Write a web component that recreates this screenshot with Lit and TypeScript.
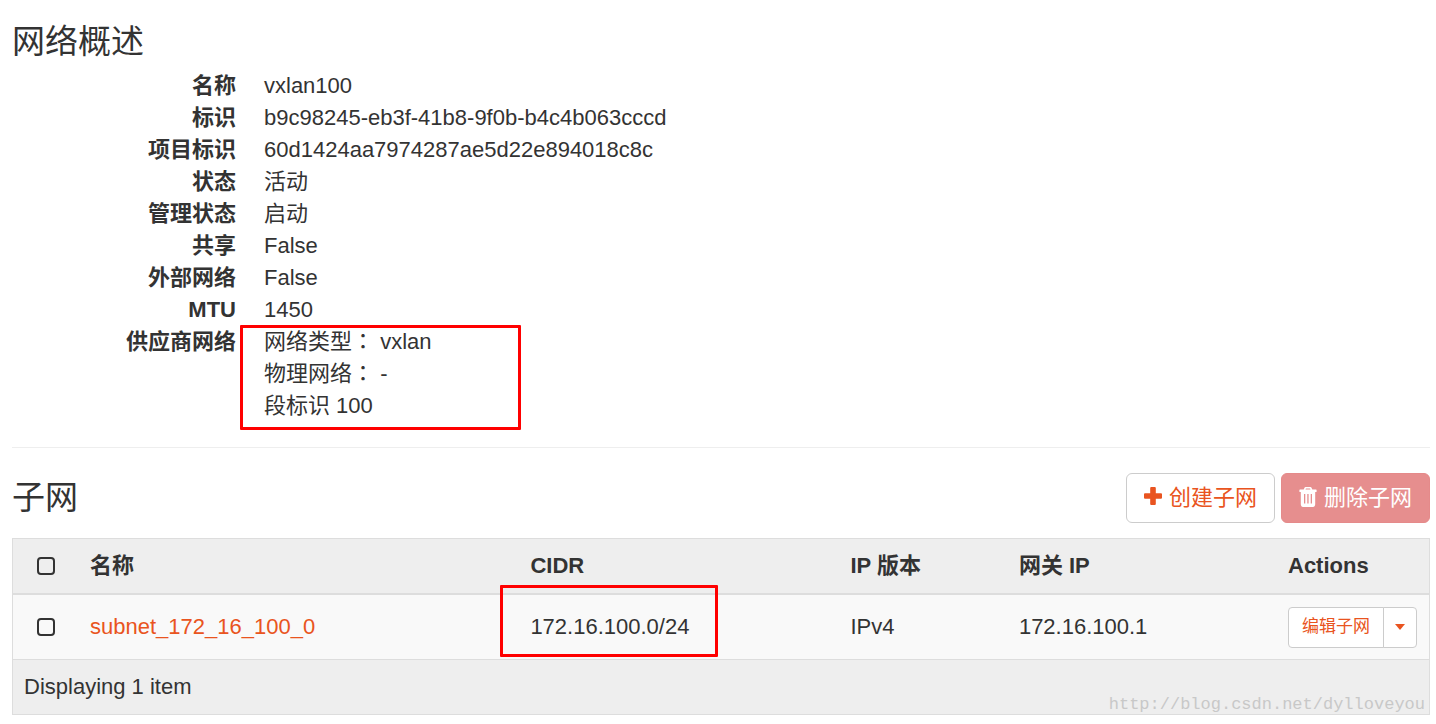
import { LitElement, html, css, svg } from "lit";
import { customElement, state } from "lit/decorators.js";

interface Subnet {
  name: string;
  cidr: string;
  version: string;
  gateway: string;
}

const DETAILS: Array<[string, string]> = [
  ["名称", "vxlan100"],
  ["标识", "b9c98245-eb3f-41b8-9f0b-b4c4b063cccd"],
  ["项目标识", "60d1424aa7974287ae5d22e894018c8c"],
  ["状态", "活动"],
  ["管理状态", "启动"],
  ["共享", "False"],
  ["外部网络", "False"],
  ["MTU", "1450"],
];

const colon = html`<span class="colon">：</span>`;

const PROVIDER = [html`网络类型${colon} vxlan`, html`物理网络${colon} -`, html`段标识 100`];

const SUBNETS: Subnet[] = [
  { name: "subnet_172_16_100_0", cidr: "172.16.100.0/24", version: "IPv4", gateway: "172.16.100.1" },
];

const plusIcon = svg`<svg class="icon" viewBox="0 0 18 20" aria-hidden="true">
  <path fill="currentColor" d="M7.2 0h3.6a1 1 0 0 1 1 1v5.2H17a1 1 0 0 1 1 1v3.6a1 1 0 0 1-1 1h-5.2V17a1 1 0 0 1-1 1H7.2a1 1 0 0 1-1-1v-5.2H1a1 1 0 0 1-1-1V7.2a1 1 0 0 1 1-1h5.2V1a1 1 0 0 1 1-1z"/>
</svg>`;

const trashIcon = svg`<svg class="icon" viewBox="0 0 18 20" aria-hidden="true">
  <path fill="currentColor" fill-rule="evenodd" d="M6.6 0h4.8c.5 0 .9.3 1.100.7L13.300 2.600H17a.6.6 0 0 1 .6.6v1.200a.6.6 0 0 1-.6.6h-.8v12.200c0 1.500-.9 2.800-2.200 2.800H4c-1.300 0-2.200-1.300-2.200-2.800V5H1a.6.6 0 0 1-.6-.6V3.200a.6.6 0 0 1 .6-.6h3.700L5.500.7C5.700.3 6.100 0 6.600 0zM7 1.500l-.5 1.100h5L11 1.500zM5 7v9.500h1.300V7zM8.300 7v9.500h1.300V7zM11.700 7v9.500H13V7z"/>
</svg>`;

@customElement("app-root")
export class AppRoot extends LitElement {
  @state() private selected = new Set<string>();

  static styles = css`
    :host {
      display: block;
      padding: 24px 6px 8px 12px;
      background: #fff;
      color: #333;
      font: 22px/32px "Liberation Sans", Arial, "Noto Sans CJK SC", sans-serif;
    }
    h2 {
      margin: 0;
      font-size: 33px;
      line-height: 36px;
      font-weight: 400;
    }
    .details {
      display: grid;
      grid-template-columns: 224px 1fr;
      column-gap: 28px;
      margin: 10px 0 25px;
    }
    dt {
      font-weight: 700;
      text-align: right;
    }
    dd {
      margin: 0;
    }
    .colon {
      font-family: "Noto Sans CJK TC", sans-serif;
      line-height: 1;
    }
    .marked {
      position: relative;
    }
    .mark {
      position: absolute;
      box-sizing: border-box;
      border: 3px solid #f00;
      border-radius: 1px;
      pointer-events: none;
    }
    .mark-provider {
      left: -24px;
      top: -1px;
      width: 281px;
      height: 105px;
    }
    .mark-cidr {
      left: -19px;
      top: -10px;
      width: 218px;
      height: 72px;
    }
    hr {
      margin: 0 0 25px;
      border: 0;
      border-top: 1px solid #eee;
    }
    .toolbar {
      display: flex;
      align-items: center;
      justify-content: space-between;
      margin-bottom: 15px;
    }
    .buttons {
      display: flex;
      gap: 6px;
    }
    button {
      font: inherit;
      cursor: pointer;
      margin: 0;
      border: 1px solid #ccc;
      background: #fff;
      color: #e95420;
    }
    .btn {
      display: flex;
      align-items: center;
      gap: 7px;
      height: 50px;
      padding: 0 17px;
      border-radius: 6px;
      white-space: nowrap;
    }
    .btn-danger {
      background: #e68e8e;
      border-color: #e58a8a;
      color: #fff;
    }
    .icon {
      display: block;
      width: 18px;
      height: 20px;
      margin-bottom: 2px;
      flex: none;
    }
    table {
      width: 100%;
      table-layout: fixed;
      border-collapse: separate;
      border-spacing: 0;
      border: 1px solid #ddd;
      box-sizing: border-box;
    }
    th,
    td {
      padding: 0 11px;
      text-align: left;
      white-space: nowrap;
    }
    th {
      height: 54px;
      background: #eee;
      border-bottom: 2px solid #ddd;
    }
    tbody td {
      height: 64px;
      background: #f9f9f9;
    }
    tfoot td {
      height: 54px;
      background: #eee;
      border-top: 1px solid #ddd;
    }
    .col-check {
      width: 66px;
    }
    .col-name {
      width: 31.1%;
    }
    .col-cidr {
      width: 22.6%;
    }
    .col-version {
      width: 11.9%;
    }
    .col-actions {
      width: 152px;
    }
    .check {
      padding-left: 24px;
      padding-right: 0;
    }
    input {
      appearance: none;
      display: block;
      box-sizing: border-box;
      width: 18px;
      height: 18px;
      margin: 0;
      border: 2px solid #333;
      border-radius: 4px;
    }
    input:checked {
      background: #333;
    }
    a {
      color: #e95420;
      text-decoration: none;
    }
    .split {
      display: flex;
    }
    .split button {
      height: 41px;
      padding: 0;
      font-size: 17px;
    }
    .split-main {
      width: 96px;
      border-radius: 4px 0 0 4px;
    }
    .split .split-toggle {
      display: grid;
      place-items: center;
      width: 34px;
      margin-left: -1px;
      border-radius: 0 4px 4px 0;
    }
    .caret {
      border: 5px solid transparent;
      border-top: 6px solid #e95420;
      border-bottom: 0;
    }
    .foot {
      display: flex;
      justify-content: space-between;
      align-items: flex-end;
    }
    .site {
      margin: 0 -7px -12px 0;
      font: 17px/20px "Liberation Mono", "Courier New", monospace;
      color: #c8c8c8;
    }
  `;

  private toggle(name: string) {
    const next = new Set(this.selected);
    next.has(name) ? next.delete(name) : next.add(name);
    this.selected = next;
  }

  private toggleAll(event: Event) {
    const on = (event.target as HTMLInputElement).checked;
    this.selected = new Set(on ? SUBNETS.map((s) => s.name) : []);
  }

  render() {
    return html`
      <section>
        <h2>网络概述</h2>
        <dl class="details">
          ${DETAILS.map(([label, value]) => html`<dt>${label}</dt><dd>${value}</dd>`)}
          <dt>供应商网络</dt>
          <dd class="marked">
            ${PROVIDER.map((line) => html`<div>${line}</div>`)}
            <span class="mark mark-provider"></span>
          </dd>
        </dl>
      </section>
      <hr />
      <section>
        <div class="toolbar">
          <h2>子网</h2>
          <div class="buttons">
            <button class="btn" type="button">${plusIcon}<span>创建子网</span></button>
            <button class="btn btn-danger" type="button">${trashIcon}<span>删除子网</span></button>
          </div>
        </div>
        <table>
          <colgroup>
            <col class="col-check" />
            <col class="col-name" />
            <col class="col-cidr" />
            <col class="col-version" />
            <col />
            <col class="col-actions" />
          </colgroup>
          <thead>
            <tr>
              <th class="check">
                <input type="checkbox" aria-label="全选" .checked=${this.selected.size === SUBNETS.length} @change=${this.toggleAll} />
              </th>
              <th>名称</th>
              <th>CIDR</th>
              <th>IP 版本</th>
              <th>网关 IP</th>
              <th>Actions</th>
            </tr>
          </thead>
          <tbody>
            ${SUBNETS.map(
              (s) => html`<tr>
                <td class="check">
                  <input type="checkbox" aria-label=${s.name} .checked=${this.selected.has(s.name)} @change=${() => this.toggle(s.name)} />
                </td>
                <td><a href="#">${s.name}</a></td>
                <td class="marked">${s.cidr}<span class="mark mark-cidr"></span></td>
                <td>${s.version}</td>
                <td>${s.gateway}</td>
                <td>
                  <div class="split">
                    <button class="split-main" type="button">编辑子网</button>
                    <button class="split-toggle" type="button" aria-label="更多操作"><span class="caret"></span></button>
                  </div>
                </td>
              </tr>`
            )}
          </tbody>
          <tfoot>
            <tr>
              <td colspan="6">
                <div class="foot">
                  <span>Displaying ${SUBNETS.length} item</span>
                  <span class="site">http://blog.csdn.net/dylloveyou</span>
                </div>
              </td>
            </tr>
          </tfoot>
        </table>
      </section>
    `;
  }
}
